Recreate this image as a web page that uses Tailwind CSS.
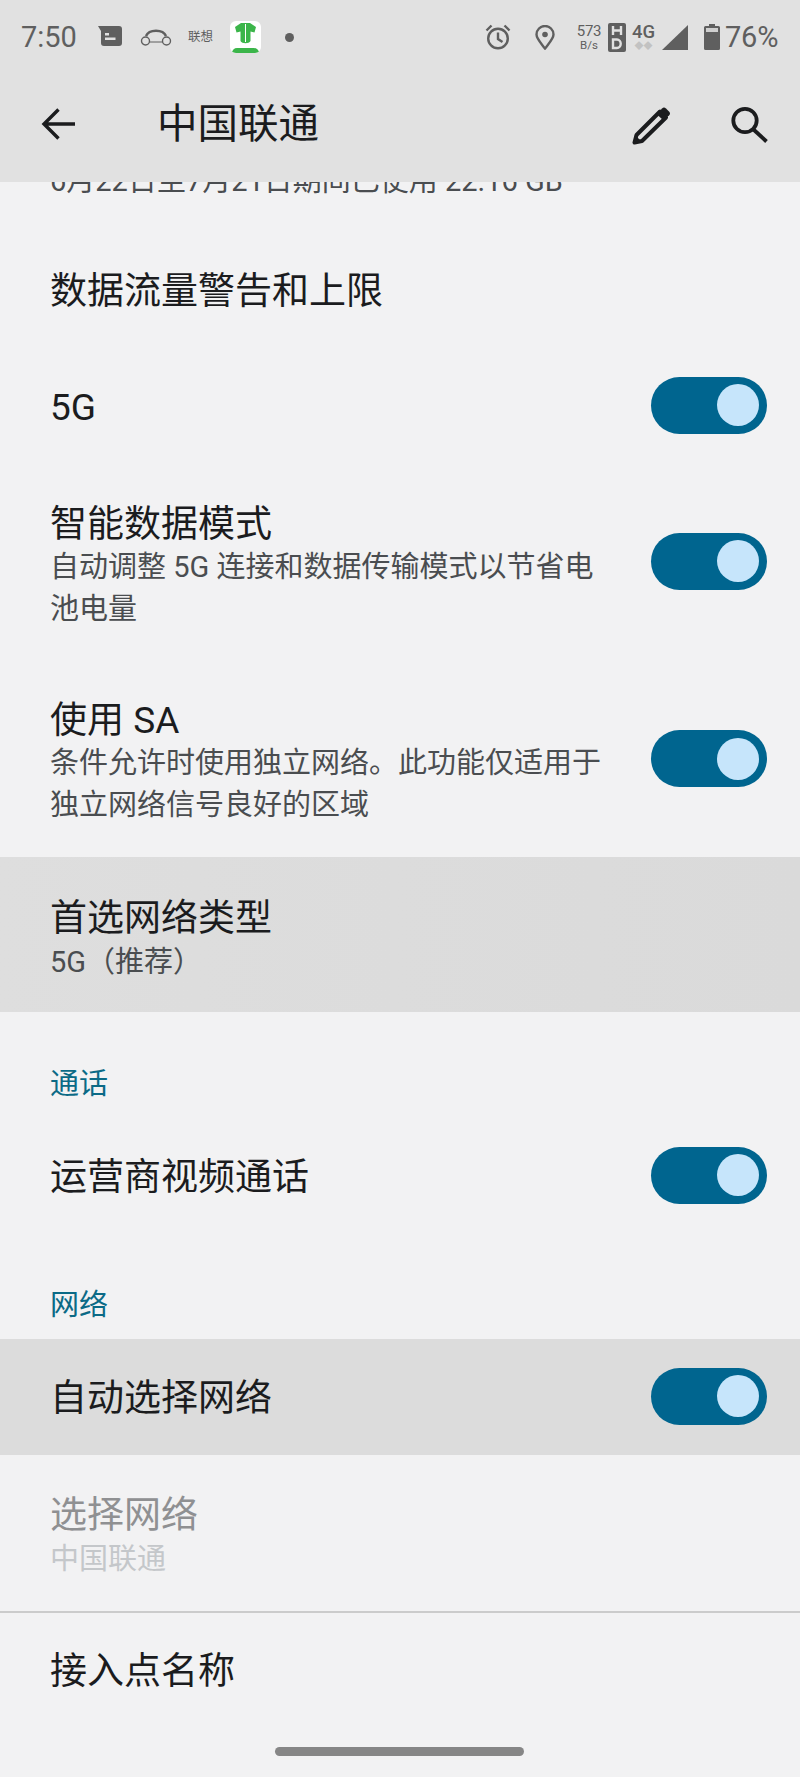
<!DOCTYPE html>
<html lang="zh-CN">
<head>
    <meta charset="UTF-8">
    <meta name="viewport" content="width=device-width, initial-scale=1.0">
    <title>中国联通</title>
    <script src="https://cdn.jsdelivr.net/npm/@tailwindcss/browser@4"></script>
</head>
<body class="m-0 bg-[#f2f2f3] font-['Roboto','Noto_Sans_CJK_SC',sans-serif]">
<div class="relative w-[800px] h-[1777px] overflow-hidden bg-[#f2f2f3]">

    <!-- Header -->
    <header class="h-[182px] bg-[#e1e1e1]">
        <!-- Status bar -->
        <div class="h-[74px] flex items-center text-[#5f5f5f]">
            <span class="ml-[21px] w-[56px] text-[29px] leading-none whitespace-nowrap">7:50</span>
            <svg class="ml-[21px] w-[25px] h-[20px] -mt-[2px]" viewBox="0 0 25 20"><path d="M0 0H21a3 3 0 0 1 3 3V17a3 3 0 0 1-3 3H6a3 3 0 0 1-3-3V5z" fill="#5f5f5f"/><path d="M7 7h4v2.500H7zM7 11.500h10.500V14H7z" fill="#e1e1e1"/></svg>
            <svg class="ml-[17px] w-[32px] h-[18px]" viewBox="0 0 32 18" fill="none" stroke="#5f5f5f" stroke-width="1.400"><path d="M6 8C9 1 23 1 26 8" stroke-width="2.500"/><circle cx="5.500" cy="13" r="4"/><circle cx="26.500" cy="13" r="4"/><path d="M9.500 14H22.500" stroke-width="1"/></svg>
            <span class="ml-[16px] w-[26px] text-[12.5px] leading-none whitespace-nowrap">联想</span>
            <div class="ml-[16px] w-[31px] h-[32px] rounded-[6px] bg-white flex flex-col items-center justify-between overflow-hidden">
                <svg class="w-[23px] h-[23px] mt-[1px]" viewBox="0 0 23 23"><path d="M1 5L7 1H16L22 5L20.500 10.500L16.500 9.500V19C15 22 8 22 6.500 19V9.500L2.500 10.500z" fill="#3bb54a"/><path d="M11.500 2V20" stroke="#fff" stroke-width="1"/></svg>
                <div class="w-[27px] h-[5px] rounded-t-full bg-[#3bb54a]"></div>
            </div>
            <div class="ml-[24px] size-[9px] rounded-full bg-[#5f5f5f]"></div>

            <svg class="ml-[191px] w-[26px] h-[26px]" viewBox="0 0 26 26" fill="none" stroke="#5f5f5f" stroke-width="2.400"><circle cx="13" cy="14.500" r="9.800"/><path d="M13 8.500V15l4.500 3"/><path d="M1.500 6.500L6.500 1.500M24.500 6.500L19.500 1.500"/></svg>
            <svg class="ml-[24px] w-[20px] h-[25px]" viewBox="0 0 20 25"><path d="M10 23.500C5 17 1.500 13.500 1.500 9.500a8.500 8.500 0 0 1 17 0C18.500 13.500 15 17 10 23.500z" fill="none" stroke="#5f5f5f" stroke-width="2.400"/><circle cx="10" cy="9.500" r="2.800" fill="#5f5f5f"/></svg>
            <div class="ml-[21px] w-[26px] flex flex-col items-center">
                <span class="text-[15px] leading-[15px] tracking-[-0.3px]">573</span>
                <span class="text-[11.500px] leading-[12px]">B/s</span>
            </div>
            <svg class="ml-[6px] w-[18px] h-[29px]" viewBox="0 0 18 29"><rect width="18" height="29" rx="2" fill="#5f5f5f"/><path d="M5 3v9M13 3v9M5 7.500h8" stroke="#e1e1e1" stroke-width="2.400" fill="none"/><path d="M5 16.500h4a3.500 4 0 0 1 0 8.500H5z" stroke="#e1e1e1" stroke-width="2.400" fill="none"/></svg>
            <div class="ml-[5px] w-[25px] flex flex-col items-center">
                <span class="text-[18.500px] leading-[18px] font-medium">4G</span>
                <span class="text-[9px] leading-[10px] text-[#c2c2c2]">◆◆</span>
            </div>
            <svg class="ml-[6px] w-[26px] h-[25px]" viewBox="0 0 26 25"><path d="M26 0V25H0z" fill="#5f5f5f"/></svg>
            <svg class="ml-[16px] w-[16px] h-[26px]" viewBox="0 0 16 26"><path d="M5 0H11V2H14.500A1.500 1.500 0 0 1 16 3.500V24.500A1.500 1.500 0 0 1 14.500 26H1.500A1.500 1.500 0 0 1 0 24.500V3.500A1.500 1.500 0 0 1 1.500 2H5z" fill="#5f5f5f"/><rect x="2" y="4" width="12" height="4" fill="#cfcfcf"/></svg>
            <span class="ml-[5px] text-[29px] leading-none tracking-[-0.2px]">76%</span>
        </div>
        <!-- Toolbar -->
        <div class="h-[102px] flex items-center">
            <svg class="ml-[40px] w-[36px] h-[36px] -mt-[3px]" viewBox="0 0 36 36" fill="none" stroke="#1b1c1e" stroke-width="3.400"><path d="M35 18H5M18.500 3.500L4 18L18.500 32.500"/></svg>
            <h1 class="ml-[81px] text-[40.500px] font-normal leading-none text-[#1b1c1e] -mt-[1px]">中国联通</h1>
            <svg class="ml-auto w-[40px] h-[40px] -mt-[1px]" viewBox="0 0 40 40"><path d="M3.500 37.500L5.500 30L29 6.500L35 12.500L11 36z" fill="none" stroke="#1b1c1e" stroke-width="4" stroke-linejoin="round"/><path d="M26 9.500L31 3.500Q33 1.500 35 3.500L38 6.500Q40 8.500 38 10.500L32 15z" fill="#1b1c1e"/><path d="M2 39L4 30L11 37z" fill="#1b1c1e"/></svg>
            <svg class="ml-[59px] mr-[30px] w-[40px] h-[40px] -mt-[3px]" viewBox="0 0 40 40" fill="none" stroke="#1b1c1e" stroke-width="3.800"><circle cx="15" cy="16.500" r="11.700"/><path d="M23.500 25.500L36.500 37.500"/></svg>
        </div>
    </header>

    <main>
        <!-- Clipped by the header while scrolling -->
        <div class="h-[50px] overflow-hidden pl-[50px]">
            <p class="-mt-[22px] text-[29px] leading-[42px] text-[#4a4d50]">6月22日至7月21日期间已使用 22.16 GB</p>
        </div>

        <div class="h-[116px] flex items-center pl-[50px] pr-[33px]">
            <span class="h-[46px] text-[37px] leading-[50px] text-[#1b1c1e]">数据流量警告和上限</span>
        </div>

        <div class="h-[116px] flex items-center justify-between pl-[50px] pr-[33px]">
            <span class="h-[46px] text-[37px] leading-[50px] text-[#1b1c1e]">5G</span>
            <div class="w-[116px] h-[57px] -mt-[2px] rounded-full bg-[#00658f] flex items-center justify-end pr-[8px]"><div class="size-[42px] rounded-full bg-[#c6e5fb]"></div></div>
        </div>

        <div class="h-[196px] flex items-center justify-between pl-[50px] pr-[33px]">
            <div class="w-[556px] pt-[5px]">
                <div class="h-[46px] text-[37px] leading-[49px] text-[#1b1c1e]">智能数据模式</div>
                <div class="text-[29px] leading-[42px] text-[#4a4d50]">自动调整 5G 连接和数据传输模式以节省电池电量</div>
            </div>
            <div class="w-[116px] h-[57px] -mt-[2px] rounded-full bg-[#00658f] flex items-center justify-end pr-[8px]"><div class="size-[42px] rounded-full bg-[#c6e5fb]"></div></div>
        </div>

        <div class="h-[197px] flex items-center justify-between pl-[50px] pr-[33px]">
            <div class="w-[556px] pt-[5px]">
                <div class="h-[46px] text-[37px] leading-[50px] text-[#1b1c1e]">使用 SA</div>
                <div class="text-[29px] leading-[42px] text-[#4a4d50]">条件允许时使用独立网络。此功能仅适用于独立网络信号良好的区域</div>
            </div>
            <div class="w-[116px] h-[57px] rounded-full bg-[#00658f] flex items-center justify-end pr-[8px]"><div class="size-[42px] rounded-full bg-[#c6e5fb]"></div></div>
        </div>

        <div class="h-[155px] bg-gradient-to-r from-[#dedede] to-[#dadada] pl-[50px] pt-[37px]">
            <div class="h-[46px] text-[37px] leading-[49px] text-[#1b1c1e]">首选网络类型</div>
            <div class="text-[29px] leading-[44px] text-[#4a4d50]">5G（推荐）</div>
        </div>

        <div class="h-[113px] pl-[50px] pt-[50px]">
            <h2 class="text-[29px] font-normal leading-[44px] text-[#0b6a86]">通话</h2>
        </div>

        <div class="h-[102px] flex items-center justify-between pl-[50px] pr-[33px]">
            <span class="h-[46px] text-[37px] leading-[50px] text-[#1b1c1e]">运营商视频通话</span>
            <div class="w-[116px] h-[57px] -mt-[2px] rounded-full bg-[#00658f] flex items-center justify-end pr-[8px]"><div class="size-[42px] rounded-full bg-[#c6e5fb]"></div></div>
        </div>

        <div class="h-[112px] pl-[50px] pt-[56px]">
            <h2 class="text-[29px] font-normal leading-[44px] text-[#0b6a86]">网络</h2>
        </div>

        <div class="h-[116px] bg-[#dcdcdc] flex items-center justify-between pl-[50px] pr-[33px]">
            <span class="h-[46px] text-[37px] leading-[50px] text-[#1b1c1e]">自动选择网络</span>
            <div class="w-[116px] h-[57px] -mt-[2px] rounded-full bg-[#00658f] flex items-center justify-end pr-[8px]"><div class="size-[42px] rounded-full bg-[#c6e5fb]"></div></div>
        </div>

        <div class="h-[156px] pl-[50px] pt-[36px]">
            <div class="h-[46px] text-[37px] leading-[50px] text-[#8f9092]">选择网络</div>
            <div class="text-[29px] leading-[44px] text-[#c4c7ca]">中国联通</div>
        </div>

        <div class="h-[2px] bg-[#cbcbcb]"></div>

        <div class="h-[114px] flex items-center pl-[50px]">
            <span class="h-[46px] text-[37px] leading-[50px] text-[#1b1c1e]">接入点名称</span>
        </div>
    </main>

    <!-- Gesture bar -->
    <div class="absolute left-[275px] top-[1747px] w-[249px] h-[9px] rounded-full bg-[#868686]"></div>
</div>
</body>
</html>
